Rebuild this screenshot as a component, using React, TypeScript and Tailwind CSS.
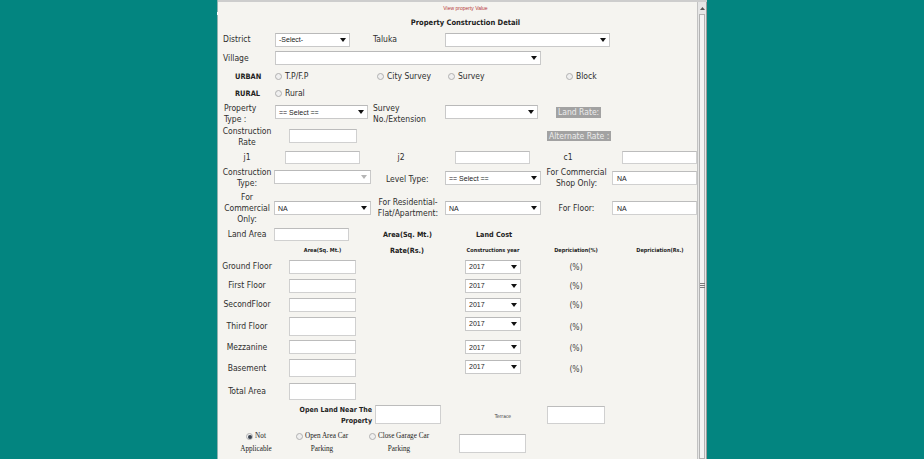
import React from "react";

const SEL_FONT = "font-['Liberation_Sans_Narrow','Liberation_Sans',sans-serif]";

function Arrow({ light }: { light?: boolean }) {
  return (
    <svg width="6" height="4" viewBox="0 0 6 4" className="shrink-0">
      <polygon points="0,0 6,0 3,4" fill={light ? "#b5b5b5" : "#111111"} />
    </svg>
  );
}

function Sel({ w, text, light, extra = "" }: { w: string; text: string; light?: boolean; extra?: string }) {
  return (
    <div
      className={`${w} ${extra} h-[14px] shrink-0 bg-white border border-[#c9c9c9] border-t-[#b9b9b9] flex items-center justify-between pl-[3px] pr-[3px] text-[7px] text-[#222] ${SEL_FONT}`}
    >
      <span className="leading-none">{text}</span>
      <Arrow light={light} />
    </div>
  );
}

function Inp({ w, h, text }: { w: string; h: string; text?: string }) {
  return (
    <div
      className={`${w} ${h} shrink-0 bg-white border border-[#d0d0d0] border-t-[#bcbcbc] flex items-center pl-[4px] text-[7px] text-[#222] ${SEL_FONT}`}
    >
      {text}
    </div>
  );
}

function Radio({ checked }: { checked?: boolean }) {
  return (
    <span className="w-[7px] h-[7px] shrink-0 rounded-full border border-[#b0b0b0] bg-[#efefef] flex items-center justify-center">
      {checked && <span className="w-[4px] h-[4px] rounded-full bg-[#3a4350]" />}
    </span>
  );
}

function RadioItem({ label }: { label: string }) {
  return (
    <span className="flex items-center gap-[3px]">
      <Radio />
      <span>{label}</span>
    </span>
  );
}

function FloorRow({ label, rowH, inH, selExtra = "" }: { label: string; rowH: string; inH: string; selExtra?: string }) {
  return (
    <div className={`${rowH} flex items-center pl-[4px]`}>
      <span className="w-[50px] text-center">{label}</span>
      <div className="ml-[17px]">
        <Inp w="w-[67px]" h={inH} />
      </div>
      <Sel w="w-[56px]" text="2017" extra={`ml-[109px] ${selExtra}`} />
      <span className="w-[110px] text-center pt-[2px] text-[#444]">(%)</span>
    </div>
  );
}

export default function App() {
  return (
    <div className="w-[924px] h-[459px] bg-[#038580] flex overflow-hidden font-['DejaVu_Sans_Condensed','Liberation_Sans_Narrow','Liberation_Sans',sans-serif] text-[8.5px] text-[#2e2e2e] leading-[11px]">
      <div className="w-[217px] shrink-0" />
      <div className="w-[1px] shrink-0 bg-[#8fb3b0] flex flex-col">
        <div className="mt-[12px] h-[3px] bg-white" />
      </div>
      <div className="w-[489px] shrink-0 flex border-t-2 border-[#cdcdcd]">
        <div className="w-[479px] shrink-0 bg-[#f5f4f0] flex flex-col">
          <div className="h-[12px] flex items-center justify-center pl-[16px]">
            <span className="text-[5px] leading-none text-[#b53a3a] font-['Liberation_Sans',sans-serif]">View property Value</span>
          </div>
          <div className="h-[16px] flex items-center justify-center pl-[16px]">
            <span className="text-[7.5px] font-bold text-[#222]">Property Construction Detail</span>
          </div>

          {/* District */}
          <div className="h-[19px] flex items-center pl-[5px]">
            <span className="w-[52px]">District</span>
            <Sel w="w-[75px]" text="-Select-" />
            <span className="ml-[23px] w-[72px]">Taluka</span>
            <Sel w="w-[165px]" text="" />
          </div>

          {/* Village */}
          <div className="h-[18px] flex items-center pl-[5px]">
            <span className="w-[52px]">Village</span>
            <Sel w="w-[266px]" text="" />
          </div>

          {/* URBAN */}
          <div className="h-[18px] flex items-center pl-[17px]">
            <span className="w-[40px] font-bold text-[7.4px] text-[#222]">URBAN</span>
            <span className="w-[102px]"><RadioItem label="T.P/F.P" /></span>
            <span className="w-[71px]"><RadioItem label="City Survey" /></span>
            <span className="w-[118px]"><RadioItem label="Survey" /></span>
            <span><RadioItem label="Block" /></span>
          </div>

          {/* RURAL */}
          <div className="h-[16px] flex items-center pl-[17px]">
            <span className="w-[40px] font-bold text-[7.4px] text-[#222]">RURAL</span>
            <span><RadioItem label="Rural" /></span>
          </div>

          {/* Property Type */}
          <div className="h-[23px] flex items-center pl-[6px]">
            <span className="w-[51px] flex flex-col pt-[2px]">
              <span>Property</span>
              <span>Type :</span>
            </span>
            <Sel w="w-[93px]" text="== Select ==" extra="-mt-[1px]" />
            <span className="ml-[5px] w-[72px] flex flex-col pt-[2px]">
              <span>Survey</span>
              <span>No./Extension</span>
            </span>
            <Sel w="w-[93px]" text="" extra="-mt-[1px]" />
            <span className="ml-[18px] px-[2px] h-[11px] flex items-center bg-[#a2a2a2] text-[#ececec]">Land Rate:</span>
          </div>

          {/* Construction Rate */}
          <div className="h-[24px] flex items-center pl-[4px]">
            <span className="w-[50px] flex flex-col items-center pt-[1px]">
              <span>Construction</span>
              <span>Rate</span>
            </span>
            <div className="ml-[17px]">
              <Inp w="w-[68px]" h="h-[14px]" />
            </div>
            <span className="ml-[190px] px-[2px] h-[10px] flex items-center bg-[#a2a2a2] text-[#ececec]">Alternate Rate :</span>
          </div>

          {/* j1 j2 c1 */}
          <div className="h-[18px] flex items-center pl-[4px]">
            <span className="w-[50px] text-center">j1</span>
            <div className="ml-[13px]">
              <Inp w="w-[75px]" h="h-[13px]" />
            </div>
            <span className="w-[82px] text-center">j2</span>
            <div className="ml-[13px]">
              <Inp w="w-[75px]" h="h-[13px]" />
            </div>
            <span className="w-[76px] text-center">c1</span>
            <div className="ml-[16px]">
              <Inp w="w-[75px]" h="h-[13px]" />
            </div>
          </div>

          {/* Construction Type */}
          <div className="h-[24px] flex items-center pl-[4px]">
            <span className="w-[50px] flex flex-col items-center">
              <span>Construction</span>
              <span>Type:</span>
            </span>
            <Sel w="w-[97px]" text="" light extra="ml-[2px] -mt-[2px]" />
            <span className="ml-[15px] w-[59px] pt-[3px]">Level Type:</span>
            <Sel w="w-[96px]" text="== Select ==" />
            <span className="w-[71px] flex flex-col items-center">
              <span>For Commercial</span>
              <span>Shop Only:</span>
            </span>
            <Inp w="w-[85px]" h="h-[14px]" text="NA" />
          </div>

          {/* For Commercial Only */}
          <div className="h-[36px] flex items-center pl-[4px]">
            <span className="w-[50px] flex flex-col items-center">
              <span>For</span>
              <span>Commercial</span>
              <span>Only:</span>
            </span>
            <Sel w="w-[97px]" text="NA" extra="ml-[2px]" />
            <span className="w-[74px] flex flex-col items-center">
              <span>For Residential-</span>
              <span>Flat/Apartment:</span>
            </span>
            <Sel w="w-[96px]" text="NA" />
            <span className="w-[71px] text-center">For Floor:</span>
            <Inp w="w-[85px]" h="h-[14px]" text="NA" />
          </div>

          {/* Land Area */}
          <div className="h-[17px] flex items-center pl-[4px]">
            <span className="w-[50px] text-center">Land Area</span>
            <div className="ml-[2px]">
              <Inp w="w-[75px]" h="h-[13px]" />
            </div>
            <span className="ml-[34px] w-[93px] font-bold text-[7.2px] text-[#222]">Area(Sq. Mt.)</span>
            <span className="font-bold text-[7.2px] text-[#222]">Land Cost</span>
          </div>

          {/* Header */}
          <div className="h-[14px] flex items-center font-bold text-[#222]">
            <span className="w-[71px]" />
            <span className="w-[67px] text-center text-[5.5px]">Area(Sq. Mt.)</span>
            <span className="w-[102px] text-center text-[7.2px]">Rate(Rs.)</span>
            <span className="ml-[7px] w-[56px] text-center text-[5.5px] whitespace-nowrap">Constructions year</span>
            <span className="w-[110px] text-center text-[5.5px]">Depriciation(%)</span>
            <span className="w-[58px] text-center text-[5.5px] whitespace-nowrap">Depriciation(Rs.)</span>
          </div>

          <FloorRow label="Ground Floor" rowH="h-[19px]" inH="h-[14px]" />
          <FloorRow label="First Floor" rowH="h-[19px]" inH="h-[14px]" />
          <FloorRow label="SecondFloor" rowH="h-[19px]" inH="h-[14px]" />
          <FloorRow label="Third Floor" rowH="h-[24px]" inH="h-[19px]" selExtra="-mt-[5px]" />
          <FloorRow label="Mezzanine" rowH="h-[18px]" inH="h-[14px]" />
          <FloorRow label="Basement" rowH="h-[24px]" inH="h-[18px]" selExtra="-mt-[3px]" />

          {/* Total Area */}
          <div className="h-[22px] flex items-center pl-[4px]">
            <span className="w-[50px] text-center">Total Area</span>
            <div className="ml-[17px]">
              <Inp w="w-[67px]" h="h-[17px]" />
            </div>
          </div>

          {/* Open land */}
          <div className="h-[25px] flex items-center">
            <span className="w-[154px] flex flex-col items-end font-bold text-[7px] text-[#222] pt-[3px]">
              <span>Open Land Near The</span>
              <span>Property</span>
            </span>
            <div className="ml-[3px]">
              <Inp w="w-[66px]" h="h-[19px]" />
            </div>
            <span className="ml-[18px] w-[88px] text-center text-[5px] pt-[3px]">Terrace</span>
            <Inp w="w-[58px]" h="h-[18px]" />
          </div>

          {/* Parking radios */}
          <div className="h-[32px] flex items-center font-['Liberation_Serif',serif] text-[7.2px] leading-[13px] text-[#222]">
            <span className="w-[76px] flex flex-col items-center">
              <span className="flex items-center gap-[2px]"><Radio checked /><span>Not</span></span>
              <span>Applicable</span>
            </span>
            <span className="w-[56px] flex flex-col items-center">
              <span className="flex items-center gap-[2px] whitespace-nowrap"><Radio /><span>Open Area Car</span></span>
              <span>Parking</span>
            </span>
            <span className="w-[98px] flex flex-col items-center">
              <span className="flex items-center gap-[2px] whitespace-nowrap"><Radio /><span>Close Garage Car</span></span>
              <span>Parking</span>
            </span>
            <div className="ml-[11px]">
              <Inp w="w-[67px]" h="h-[19px]" />
            </div>
          </div>
        </div>

        {/* scrollbar */}
        <div className="w-[10px] shrink-0 flex flex-col bg-[#e6e6e6] border-l border-[#c2c2c2] border-r border-r-[#9c9c9c]">
          <div className="h-[12px] flex items-center justify-center pl-[1px]">
            <svg width="5" height="3" viewBox="0 0 5 3">
              <polygon points="2.5,0 5,3 0,3" fill="#555" />
            </svg>
          </div>
          <div className="flex-1 mx-[1px] border border-[#b3b3b3] bg-[#f4f4f4] flex flex-col items-center">
            <div className="mt-[268px] w-[5px] flex flex-col gap-[1px]">
              <div className="h-[1px] bg-[#7a7a7a]" />
              <div className="h-[1px] bg-[#7a7a7a]" />
              <div className="h-[1px] bg-[#7a7a7a]" />
            </div>
          </div>
        </div>
      </div>
    </div>
  );
}
